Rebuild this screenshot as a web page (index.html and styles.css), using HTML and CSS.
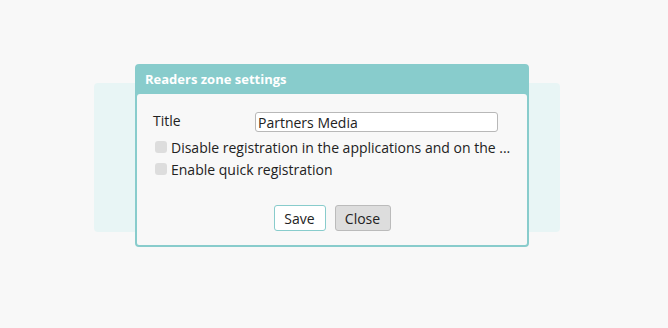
FILE: index.html
```html
<!DOCTYPE html>
<html>
<head>
<meta charset="utf-8">
<link rel="stylesheet" href="styles.css">
</head>
<body>
<div class="stage">
  <div class="panel"></div>
  <div class="dialog">
    <div class="dialog-head">Readers zone settings</div>
    <div class="dialog-body">
      <div class="field">
        <span class="label">Title</span>
        <input class="input" type="text" value="Partners Media">
      </div>
      <div class="check"><span class="box"></span><span>Disable registration in the applications and on the ...</span></div>
      <div class="check"><span class="box"></span><span>Enable quick registration</span></div>
      <div class="actions">
        <button class="btn btn-save">Save</button>
        <button class="btn btn-close">Close</button>
      </div>
    </div>
  </div>
</div>
</body>
</html>
```

FILE: styles.css
```css
html, body {
  margin: 0;
  padding: 0;
  background: #f8f8f8;
  font-family: "Open Sans", "Liberation Sans", Arial, sans-serif;
  font-size: 14px;
  color: #222;
}
.stage {
  position: relative;
  width: 668px;
  height: 328px;
  padding-top: 83px;
  box-sizing: border-box;
}
.panel {
  margin-left: 94px;
  width: 466px;
  height: 149px;
  background: #e8f5f5;
  border-radius: 4px;
}
.dialog {
  position: absolute;
  left: 135px;
  top: 64px;
  width: 394px;
  box-sizing: border-box;
  border: 2px solid #88cccc;
  border-radius: 4px;
  background: #88cccc;
}
.dialog-head {
  height: 28px;
  padding-left: 8px;
  line-height: 27px;
  color: #fff;
  font-weight: bold;
  font-size: 13px;
}
.dialog-body {
  background: #f8f8f8;
  border-radius: 3px 3px 2px 2px;
  padding: 18px 16px 14px 16px;
}
.field {
  display: flex;
  align-items: center;
  height: 20px;
}
.label {
  width: 102px;
  margin-top: -4px;
}
.input {
  width: 243px;
  height: 20px;
  box-sizing: border-box;
  border: 1px solid #b8b8b8;
  border-radius: 3px;
  background: #fff;
  padding: 0 2px;
  font-family: inherit;
  font-size: 14px;
  color: #222;
  outline: none;
}
.check {
  display: flex;
  align-items: center;
  gap: 4px;
  height: 22px;
  padding-left: 2px;
}
.field + .check { margin-top: 4px; }
.box {
  width: 12px;
  height: 12px;
  border-radius: 3px;
  background: #dddddd;
  flex: none;
}
.actions {
  display: flex;
  justify-content: center;
  gap: 9px;
  margin-top: 25px;
}
.btn {
  height: 26px;
  box-sizing: border-box;
  border-radius: 3px;
  font-family: inherit;
  font-size: 14px;
  color: #222;
  padding: 0;
}
.btn-save {
  width: 52px;
  background: #fff;
  border: 1px solid #88cccc;
}
.btn-close {
  width: 56px;
  background: #dddddd;
  border: 1px solid #bbbbbb;
}
```
